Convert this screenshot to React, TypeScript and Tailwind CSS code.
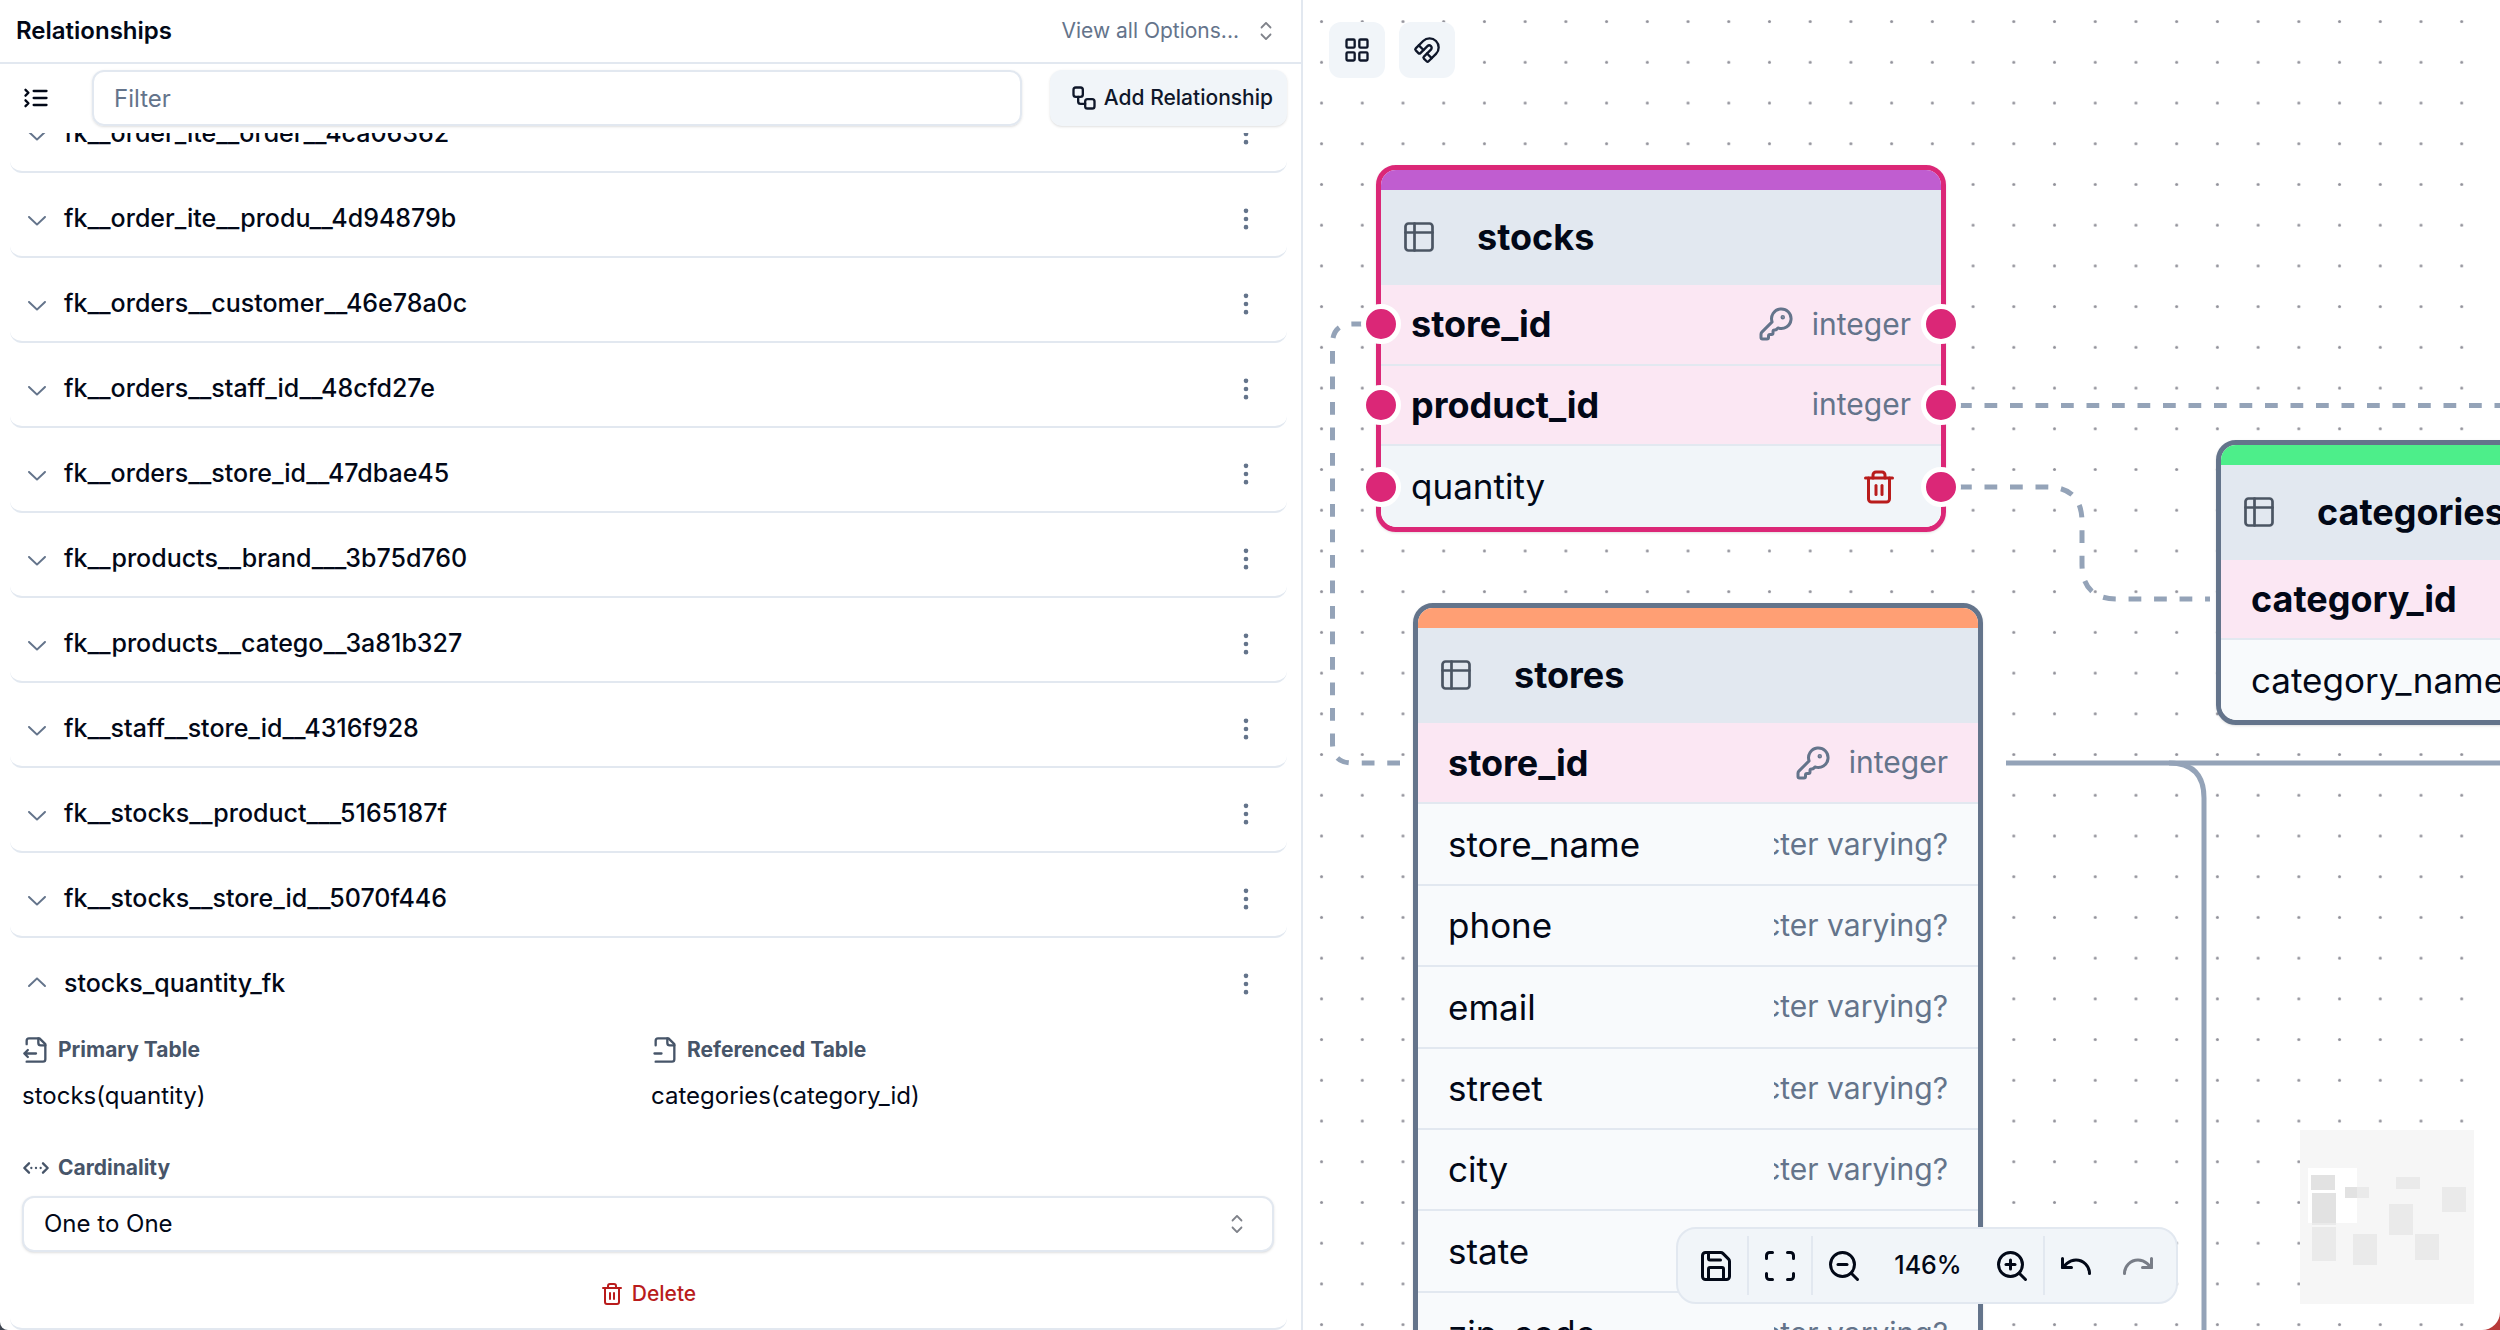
import React, { useState } from 'react';
import {
  EllipsisVertical,
  KeyRound,
  LayoutGrid,
  Magnet,
  Redo,
  Save,
  Scan,
  Trash2,
  Undo,
  Workflow,
  ZoomIn,
  ZoomOut,
} from 'lucide-react';
import { RxCaretSort, RxChevronDown, RxChevronUp } from 'react-icons/rx';

interface Field {
  name: string;
  type: string;
  primary?: boolean;
  showKey?: boolean;
  hovered?: boolean;
}

interface TableNodeProps {
  name: string;
  fields: Field[];
  position: string;
  rowsHeight: string;
  barColor: string;
  selected?: boolean;
}

const relationships = [
  'fk__order_ite__order__4ca06362',
  'fk__order_ite__produ__4d94879b',
  'fk__orders__customer__46e78a0c',
  'fk__orders__staff_id__48cfd27e',
  'fk__orders__store_id__47dbae45',
  'fk__products__brand___3b75d760',
  'fk__products__catego__3a81b327',
  'fk__staff__store_id__4316f928',
  'fk__stocks__product___5165187f',
  'fk__stocks__store_id__5070f446',
];

const stocksFields: Field[] = [
  { name: 'store_id', type: 'integer', primary: true, showKey: true },
  { name: 'product_id', type: 'integer', primary: true },
  { name: 'quantity', type: 'integer', hovered: true },
];

const storesFields: Field[] = [
  { name: 'store_id', type: 'integer', primary: true, showKey: true },
  { name: 'store_name', type: 'character varying?' },
  { name: 'phone', type: 'character varying?' },
  { name: 'email', type: 'character varying?' },
  { name: 'street', type: 'character varying?' },
  { name: 'city', type: 'character varying?' },
  { name: 'state', type: 'character varying?' },
  { name: 'zip_code', type: 'character varying?' },
];

const categoriesFields: Field[] = [
  { name: 'category_id', type: 'integer', primary: true, showKey: true },
  { name: 'category_name', type: 'character varying' },
];

const ListCollapseIcon = () => (
  <svg viewBox="0 0 24 24" fill="none" stroke="currentColor" strokeWidth="2" strokeLinecap="round" strokeLinejoin="round" className="size-7">
    <path d="m3 10 2.5-2.5L3 5M3 19l2.5-2.5L3 14M10 6h11M10 12h11M10 18h11" />
  </svg>
);

const TableIcon = () => (
  <svg viewBox="0 0 24 24" fill="none" stroke="currentColor" strokeWidth="1.8" strokeLinecap="round" className="size-9 text-[#4b5563]">
    <rect x="3" y="3" width="18" height="18" rx="2" />
    <path d="M3 9h18M9 3v18" />
  </svg>
);

const FileOutputIcon = () => (
  <svg viewBox="0 0 24 24" fill="none" stroke="currentColor" strokeWidth="2" strokeLinecap="round" strokeLinejoin="round" className="size-7">
    <path d="M14 2v4a2 2 0 0 0 2 2h4" />
    <path d="M4 7V4a2 2 0 0 1 2-2h9l5 5v13a2 2 0 0 1-2 2H4" />
    <path d="M2 15h10M5 12l-3 3 3 3" />
  </svg>
);

const FileMinusIcon = () => (
  <svg viewBox="0 0 24 24" fill="none" stroke="currentColor" strokeWidth="2" strokeLinecap="round" strokeLinejoin="round" className="size-7">
    <path d="M14 2v4a2 2 0 0 0 2 2h4" />
    <path d="M4 22h14a2 2 0 0 0 2-2V7l-5-5H6a2 2 0 0 0-2 2v4" />
    <path d="M3 15h6" />
  </svg>
);

const CardinalityIcon = () => (
  <svg viewBox="0 0 24 24" fill="none" stroke="currentColor" strokeWidth="2" strokeLinecap="round" strokeLinejoin="round" className="size-7">
    <path d="m18 8 4 4-4 4M6 8l-4 4 4 4M8 12h.01M12 12h.01M16 12h.01" />
  </svg>
);

const SidePanel = () => {
  const [filter, setFilter] = useState('');
  const [cardinality, setCardinality] = useState('one_to_one');

  return (
    <aside className="flex h-full w-[52.12%] shrink-0 flex-col border-r-2 border-slate-200">
      <header className="flex h-16 shrink-0 items-center justify-between border-b-2 border-slate-200 pr-5 pl-4">
        <h1 className="text-2xl font-semibold">Relationships</h1>
        <button type="button" className="flex items-center gap-3 text-[21px] text-[#64748b]">
          View all Options...
          <RxCaretSort className="size-[30px] text-[#020817] opacity-50" />
        </button>
      </header>

      <div className="flex h-[69px] shrink-0 items-start pt-[6px] pr-[14px]">
        <button type="button" aria-label="Collapse all" className="flex h-14 w-[92px] items-center pl-[22px]">
          <ListCollapseIcon />
        </button>
        <input
          type="text"
          aria-label="Filter"
          placeholder="Filter"
          value={filter}
          onChange={(e) => setFilter(e.target.value)}
          className="h-14 min-w-0 flex-1 rounded-xl border-2 border-slate-200 px-5 text-2xl shadow-sm placeholder:text-[#64748b]"
        />
        <button
          type="button"
          className="ml-7 flex h-14 items-center gap-[6px] rounded-xl bg-slate-100 pr-[14px] pl-5 text-[21px] font-medium text-[#0f172a] shadow-sm"
        >
          <Workflow className="size-7" />
          Add Relationship
        </button>
      </div>

      <div className="flex min-h-0 flex-1 flex-col justify-end overflow-hidden pr-[14px] pl-[10px]">
        <ul>
          {relationships.map((name) => (
            <li key={name} className="flex h-[85px] items-center rounded-b-xl border-b-2 border-slate-200 pt-2 pr-[27px] pl-3">
              <button type="button" className="flex flex-1 items-center gap-3 text-left text-[25px] font-medium">
                <RxChevronDown className="size-[30px] text-[#64748b]" />
                {name}
              </button>
              <button type="button" aria-label={`Options for ${name}`}>
                <EllipsisVertical className="size-7 text-[#64748b]" />
              </button>
            </li>
          ))}
        </ul>

        <section className="rounded-b-xl border-b-2 border-slate-200 pr-[13px] pl-3">
          <div className="flex h-[92px] items-center pr-[14px]">
            <button type="button" className="flex flex-1 items-center gap-3 text-left text-[25px] font-medium">
              <RxChevronUp className="size-[30px] text-[#64748b]" />
              stocks_quantity_fk
            </button>
            <button type="button" aria-label="Options for stocks_quantity_fk">
              <EllipsisVertical className="size-7 text-[#64748b]" />
            </button>
          </div>

          <div className="grid grid-cols-2 gap-x-1.5">
            <div>
              <h2 className="flex h-10 items-center gap-2 text-[21px] font-bold text-[#475569]">
                <FileOutputIcon />
                Primary Table
              </h2>
              <p className="mt-[6px] text-2xl leading-10">stocks(quantity)</p>
            </div>
            <div>
              <h2 className="flex h-10 items-center gap-2 text-[21px] font-bold text-[#475569]">
                <FileMinusIcon />
                Referenced Table
              </h2>
              <p className="mt-[6px] text-2xl leading-10">categories(category_id)</p>
            </div>
          </div>

          <label htmlFor="cardinality" className="mt-8 flex h-10 items-center gap-2 text-[21px] font-bold text-[#475569]">
            <CardinalityIcon />
            Cardinality
          </label>
          <div className="relative mt-2">
            <select
              id="cardinality"
              value={cardinality}
              onChange={(e) => setCardinality(e.target.value)}
              className="h-14 w-full appearance-none rounded-xl border-2 border-slate-200 bg-white px-5 text-2xl shadow-sm"
            >
              <option value="one_to_one">One to One</option>
              <option value="one_to_many">One to Many</option>
              <option value="many_to_one">Many to One</option>
            </select>
            <RxCaretSort className="pointer-events-none absolute top-[13px] right-[22px] size-[30px] opacity-50" />
          </div>

          <div className="flex h-[76px] items-center justify-center pt-2">
            <button type="button" className="flex items-center gap-2 text-[21px] font-medium text-[#b91c1c]">
              <Trash2 className="size-6" />
              Delete
            </button>
          </div>
        </section>
      </div>
    </aside>
  );
};

const Handle = ({ side }: { side: 'left' | 'right' }) => (
  <span
    className={`absolute top-1/2 size-10 -translate-y-1/2 rounded-full border-5 border-white bg-[#db2777] ${
      side === 'left' ? '-left-5' : '-right-5'
    }`}
  />
);

const FieldRow = ({ field, selected }: { field: Field; selected?: boolean }) => {
  let background = 'bg-slate-50';
  if (field.primary) background = 'bg-[#fbe7f3]';
  if (field.hovered) background = 'bg-slate-100';

  return (
    <li
      className={`relative flex items-center justify-between border-b-2 border-slate-200 pl-[30px] last:rounded-b-2xl last:border-b-0 ${
        field.hovered ? 'pr-11' : 'pr-[30px]'
      } ${background}`}
    >
      {selected && <Handle side="left" />}
      <span className={field.primary ? 'text-[36px] font-bold' : 'text-[35px]'}>{field.name}</span>
      {field.hovered ? (
        <button type="button" aria-label={`Delete ${field.name}`}>
          <Trash2 className="size-9 text-[#b91c1c]" />
        </button>
      ) : (
        <span className="flex items-center gap-[18px] text-[#64748b]">
          {field.showKey && <KeyRound className="size-9" />}
          <span className="flex max-w-[174px] justify-end overflow-hidden text-[30px] whitespace-nowrap">{field.type}</span>
        </span>
      )}
      {selected && <Handle side="right" />}
    </li>
  );
};

const TableNode: React.FC<TableNodeProps> = ({ name, fields, position, rowsHeight, barColor, selected }) => {
  return (
    <article
      className={`absolute w-[570px] rounded-[20px] border-5 shadow-sm ${position} ${
        selected ? 'border-[#db2777]' : 'border-[#64748b]'
      }`}
    >
      <div className={`h-5 rounded-t-[15px] ${barColor}`} />
      <div className="flex h-[95px] items-center gap-10 bg-slate-200 px-5 pb-[2px]">
        <TableIcon />
        <h3 className="text-[36px] font-bold">{name}</h3>
      </div>
      <ul className={`grid auto-rows-fr ${rowsHeight}`}>
        {fields.map((field) => (
          <FieldRow key={field.name} field={field} selected={selected} />
        ))}
      </ul>
    </article>
  );
};

const Edges = () => (
  <svg className="absolute inset-0 size-full" fill="none">
    <defs>
      <pattern id="dots" x="-1.8" y="1.2" width="40.72" height="40.72" patternUnits="userSpaceOnUse">
        <circle cx="20.36" cy="20.36" r="1.5" fill="#91919a" />
      </pattern>
    </defs>
    <rect width="100%" height="100%" fill="url(#dots)" />
    <g stroke="#94a3b8" strokeWidth="5">
      <g strokeDasharray="12.75 12.75">
        <path d="M656 405.5H1300" />
        <path d="M656 487H744Q779 487 779 522V564Q779 599 814 599H907" />
        <path d="M97 763H49.5Q29.5 763 29.5 743V344Q29.5 324 49.5 324H73" />
      </g>
      <path d="M703 763H1300" />
      <path d="M866 763Q901 763 901 798V1330" />
    </g>
  </svg>
);

const miniNodes = [
  [11, 45, 24, 15],
  [12, 63, 24, 32],
  [45, 57, 24, 11],
  [12, 97, 24, 34],
  [96, 47, 24, 12],
  [142, 57, 24, 25],
  [89, 74, 24, 31],
  [53, 104, 24, 31],
  [115, 104, 24, 26],
];

const MiniMap = () => (
  <svg viewBox="0 0 174 174" className="absolute right-[26px] bottom-[26px] size-[174px] bg-white">
    {miniNodes.map(([x, y, w, h]) => (
      <rect key={`${x}-${y}`} x={x} y={y} width={w} height={h} fill="#e2e2e2" />
    ))}
    <path fillRule="evenodd" d="M0 0H174V174H0ZM8 38V93H57V38Z" fill="#f0f0f0" fillOpacity="0.6" />
  </svg>
);

const Separator = () => <span className="h-[59px] w-[2px] bg-slate-200" />;

const CanvasToolbar = () => (
  <div className="absolute bottom-[26px] left-[373px] flex h-[77px] items-center rounded-[20px] border-2 border-slate-200 bg-slate-100 px-[7px]">
    <button type="button" aria-label="Save" className="px-[13px]">
      <Save className="size-9" />
    </button>
    <Separator />
    <button type="button" aria-label="Fit view" className="px-[13px]">
      <Scan className="size-9" />
    </button>
    <Separator />
    <button type="button" aria-label="Zoom out" className="px-[13px]">
      <ZoomOut className="size-9" />
    </button>
    <button type="button" className="w-[106px] text-center text-[25px] font-medium">146%</button>
    <button type="button" aria-label="Zoom in" className="px-[13px]">
      <ZoomIn className="size-9" />
    </button>
    <Separator />
    <button type="button" aria-label="Undo" className="px-[13px]">
      <Undo className="size-9" />
    </button>
    <button type="button" aria-label="Redo" disabled className="px-[13px]">
      <Redo className="size-9 opacity-50" />
    </button>
  </div>
);

const Canvas = () => (
  <main className="relative min-w-0 flex-1 overflow-hidden">
    <Edges />
    <TableNode name="stocks" fields={stocksFields} position="left-[73px] top-[165px]" rowsHeight="h-[242px]" barColor="bg-[#c05dd0]" selected />
    <TableNode name="stores" fields={storesFields} position="left-[110px] top-[603px]" rowsHeight="h-[651px]" barColor="bg-[#ff9f74]" />
    <TableNode name="categories" fields={categoriesFields} position="left-[913px] top-[440px]" rowsHeight="h-[160px]" barColor="bg-[#4dee8a]" />
    <div className="absolute top-[22px] left-[26px] flex gap-[14px]">
      <button type="button" aria-label="Auto layout" className="flex size-14 items-center justify-center rounded-xl bg-slate-100 text-[#0f172a]">
        <LayoutGrid className="size-7" />
      </button>
      <button type="button" aria-label="Snap to grid" className="flex size-14 items-center justify-center rounded-xl bg-slate-100 text-[#0f172a]">
        <Magnet className="size-7" />
      </button>
    </div>
    <CanvasToolbar />
    <MiniMap />
  </main>
);

const App = () => {
  return (
    <div className="h-screen overflow-hidden bg-linear-to-r from-[#3f4550] to-[#b83a3a] font-['Inter',sans-serif] text-[#020817]">
      <div className="flex h-full overflow-hidden rounded-br-[18px] rounded-bl-lg bg-white">
        <SidePanel />
        <Canvas />
      </div>
    </div>
  );
};

export default App;
